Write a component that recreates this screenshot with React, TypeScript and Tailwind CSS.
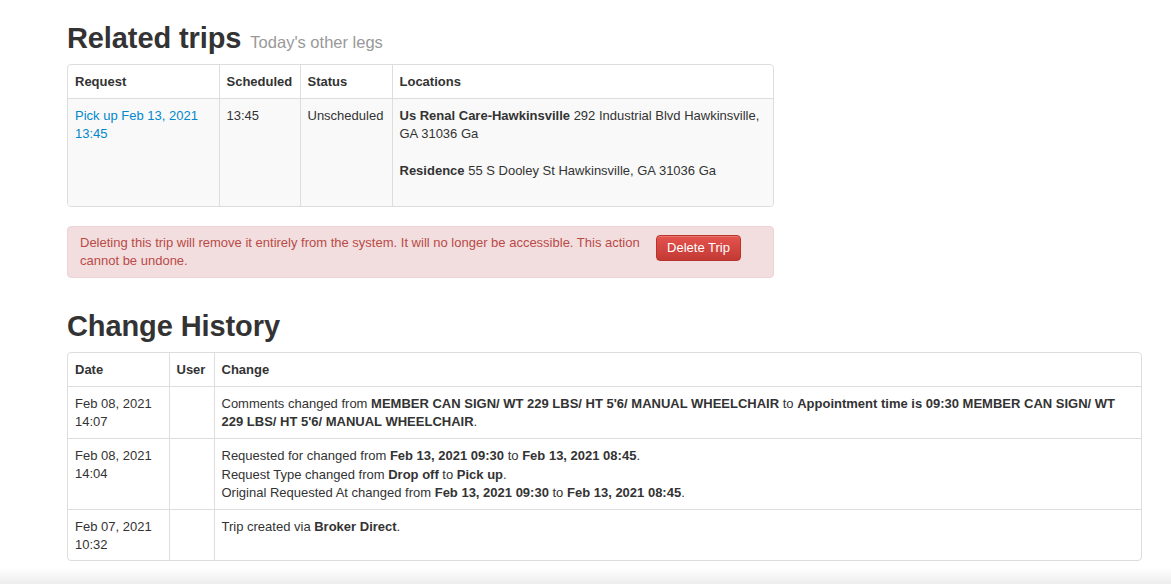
import React from "react";

const font = { fontFamily: '"Liberation Sans", Arial, Helvetica, sans-serif' };

export default function App() {
  return (
    <div className="w-[1171px] h-[584px] overflow-hidden bg-white text-[13px] leading-[18px] text-[#333] flex flex-col" style={font}>
      <div className="pl-[67px] pt-[18px] flex-1">
        {/* Related trips */}
        <div className="flex items-baseline h-[40px] mb-[6px]">
          <h2 className="text-[29px] leading-[40px] font-bold text-[#333] tracking-[-0.1px]">Related trips</h2>
          <span className="ml-[9px] text-[16.5px] text-[#999]">Today's other legs</span>
        </div>
        <div className="w-[707px] border border-[#ddd] rounded-[4px] overflow-hidden">
          <table className="w-full table-fixed border-collapse">
            <colgroup>
              <col className="w-[151px]" />
              <col className="w-[81px]" />
              <col className="w-[92px]" />
              <col />
            </colgroup>
            <thead>
              <tr>
                <th className="text-left font-bold px-[7px] pt-[8px] pb-[7px] align-top">Request</th>
                <th className="text-left font-bold px-[7px] pt-[8px] pb-[7px] align-top border-l border-[#ddd]">Scheduled</th>
                <th className="text-left font-bold px-[7px] pt-[8px] pb-[7px] align-top border-l border-[#ddd]">Status</th>
                <th className="text-left font-bold px-[7px] pt-[8px] pb-[7px] align-top border-l border-[#ddd]">Locations</th>
              </tr>
            </thead>
            <tbody>
              <tr className="bg-[#f9f9f9] border-t border-[#ddd]">
                <td className="px-[7px] pt-[8px] pb-[7px] align-top">
                  <a className="text-[#0088cc]" href="#">Pick up Feb 13, 2021 13:45</a>
                </td>
                <td className="px-[7px] pt-[8px] pb-[7px] align-top border-l border-[#ddd]">13:45</td>
                <td className="px-[7px] pt-[8px] pb-[7px] align-top border-l border-[#ddd]">Unscheduled</td>
                <td className="px-[7px] pt-[8px] pb-[7px] align-top border-l border-[#ddd]">
                  <p className="mb-[19px]"><b>Us Renal Care-Hawkinsville</b> 292 Industrial Blvd Hawkinsville, GA 31036 Ga</p>
                  <p className="mb-[19px]"><b>Residence</b> 55 S Dooley St Hawkinsville, GA 31036 Ga</p>
                </td>
              </tr>
            </tbody>
          </table>
        </div>

        {/* Alert */}
        <div className="w-[707px] mt-[19px] bg-[#f2dede] border border-[#eed3d7] rounded-[4px] text-[#b94a48] flex items-start pl-[12px] pr-[32px] pt-[7px] pb-[7px]">
          <div className="flex-1 pr-[12px]">
            Deleting this trip will remove it entirely from the system. It will no longer be accessible. This action cannot be undone.
          </div>
          <button className="mt-[1px] h-[26px] w-[85px] shrink-0 rounded-[4px] border border-[#b8332c] text-white text-[13px] bg-gradient-to-b from-[#e5534f] to-[#c23a33] shadow-[inset_0_1px_0_rgba(255,255,255,0.2)]">
            Delete Trip
          </button>
        </div>

        {/* Change History */}
        <h2 className="mt-[28px] mb-[6px] text-[29px] leading-[40px] font-bold text-[#333] tracking-[-0.1px]">Change History</h2>
        <div className="w-[1075px] border border-[#ddd] rounded-[4px] overflow-hidden">
          <table className="w-full table-fixed border-collapse">
            <colgroup>
              <col className="w-[101px]" />
              <col className="w-[45px]" />
              <col />
            </colgroup>
            <thead>
              <tr>
                <th className="text-left font-bold px-[7px] pt-[8px] pb-[7px] align-top">Date</th>
                <th className="text-left font-bold px-[7px] pt-[8px] pb-[7px] align-top border-l border-[#ddd]">User</th>
                <th className="text-left font-bold px-[7px] pt-[8px] pb-[7px] align-top border-l border-[#ddd]">Change</th>
              </tr>
            </thead>
            <tbody>
              <tr className="border-t border-[#ddd]">
                <td className="px-[7px] pt-[8px] pb-[7px] align-top">Feb 08, 2021 14:07</td>
                <td className="px-[7px] pt-[8px] pb-[7px] align-top border-l border-[#ddd]"></td>
                <td className="px-[7px] pt-[8px] pb-[7px] align-top border-l border-[#ddd]">
                  Comments changed from <b>MEMBER CAN SIGN/ WT 229 LBS/ HT 5'6/ MANUAL WHEELCHAIR</b> to <b>Appointment time is 09:30 MEMBER CAN SIGN/ WT 229 LBS/ HT 5'6/ MANUAL WHEELCHAIR</b>.
                </td>
              </tr>
              <tr className="border-t border-[#ddd]">
                <td className="px-[7px] pt-[8px] pb-[6px] align-top">Feb 08, 2021 14:04</td>
                <td className="px-[7px] pt-[8px] pb-[6px] align-top border-l border-[#ddd]"></td>
                <td className="px-[7px] pt-[8px] pb-[6px] align-top border-l border-[#ddd] leading-[18.5px]">
                  <div>Requested for changed from <b>Feb 13, 2021 09:30</b> to <b>Feb 13, 2021 08:45</b>.</div>
                  <div>Request Type changed from <b>Drop off</b> to <b>Pick up</b>.</div>
                  <div>Original Requested At changed from <b>Feb 13, 2021 09:30</b> to <b>Feb 13, 2021 08:45</b>.</div>
                </td>
              </tr>
              <tr className="border-t border-[#ddd]">
                <td className="px-[7px] pt-[8px] pb-[6px] align-top">Feb 07, 2021 10:32</td>
                <td className="px-[7px] pt-[8px] pb-[6px] align-top border-l border-[#ddd]"></td>
                <td className="px-[7px] pt-[8px] pb-[6px] align-top border-l border-[#ddd]">
                  Trip created via <b>Broker Direct</b>.
                </td>
              </tr>
            </tbody>
          </table>
        </div>
      </div>
      <div className="h-[16px] bg-gradient-to-b from-white to-[#ededed]" />
    </div>
  );
}
